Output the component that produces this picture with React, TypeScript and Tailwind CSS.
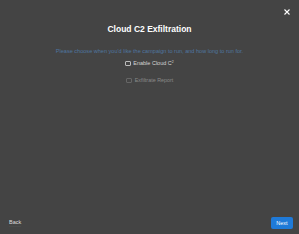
import React from "react";

export default function App() {
  return (
    <div className="relative w-[299px] h-[234px] bg-[#444444] flex flex-col" style={{ fontFamily: '"Liberation Sans", Arial, sans-serif' }}>
      <button className="absolute left-[283px] top-[8px] w-[7px] h-[7px] flex items-center justify-center text-white">
        <svg width="6" height="6" viewBox="0 0 6 6" fill="none" stroke="white" strokeWidth="1.1">
          <path d="M0.5 0.5L5.5 5.5M5.5 0.5L0.5 5.5" />
        </svg>
      </button>
      <div className="flex flex-col items-center pt-[24px]">
        <h1 className="text-[8.5px] leading-[11px] font-bold text-white">Cloud C2 Exfiltration</h1>
        <p className="mt-[13px] text-[5.55px] leading-[7px] text-[#4f76a0]">
          Please choose when you'd like the campaign to run, and how long to run for.
        </p>
        <label className="mt-[5px] flex items-center gap-[2px] text-[5.5px] leading-[7px] text-[#d4d4d4]">
          <span className="w-[6px] h-[5px] border-[0.6px] border-[#bbbbbb] rounded-[1px]" />
          <span>Enable Cloud C<sup className="text-[3.5px]">2</sup></span>
        </label>
        <label className="mt-[10px] flex items-center gap-[3px] text-[5.4px] leading-[7px] text-[#8a8a8a]">
          <span className="w-[6px] h-[5px] border-[0.6px] border-[#666666] rounded-[1px]" />
          <span>Exfiltrate Report</span>
        </label>
      </div>
      <div className="mt-auto flex items-center justify-between pl-[9px] pr-[6px] pb-[5px]">
        <button className="text-[5.5px] leading-[7px] text-[#dddddd] border-b border-[#4a4a4a]">Back</button>
        <button className="w-[22px] h-[12px] rounded-[2px] bg-[#1f7ad8] text-white text-[5.5px] leading-[7px] flex items-center justify-center">Next</button>
      </div>
    </div>
  );
}
